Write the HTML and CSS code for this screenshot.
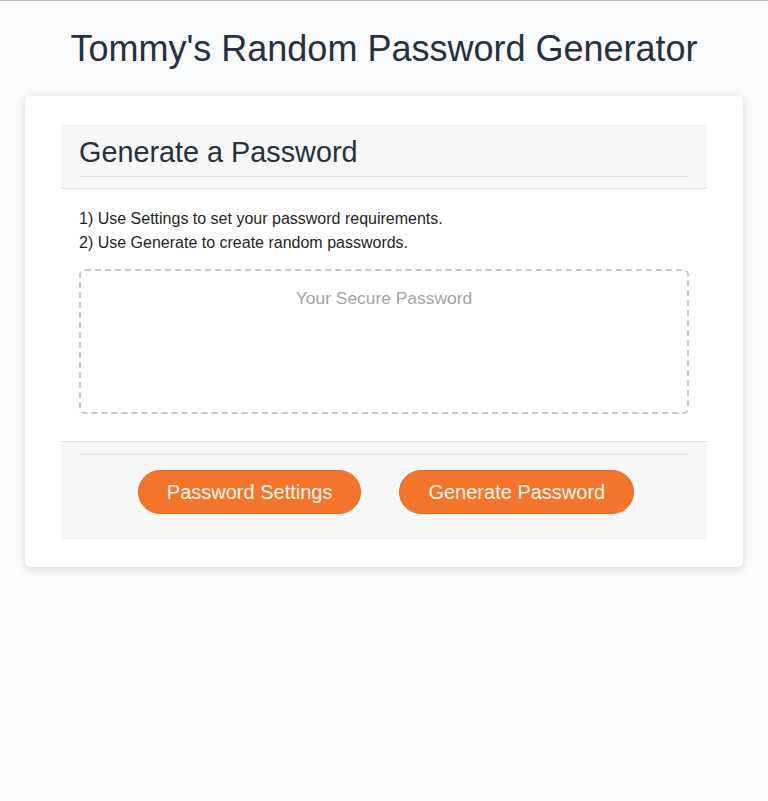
FILE: index.html
```html
<!DOCTYPE html>
<html lang="en">
<head>
<meta charset="UTF-8">
<title>Tommy's Random Password Generator</title>
<link rel="stylesheet" href="styles.css">
</head>
<body>
<div class="wrapper">
  <header class="page-header">
    <h1 class="page-title">Tommy's Random Password Generator</h1>
  </header>
  <main class="outer-card">
    <section class="card">
      <div class="card-header">
        <h2 class="card-title">Generate a Password</h2>
      </div>
      <div class="card-body">
        <p class="step">1) Use Settings to set your password requirements.</p>
        <p class="step">2) Use Generate to create random passwords.</p>
        <textarea class="password-box" readonly placeholder="Your Secure Password"></textarea>
      </div>
      <div class="card-footer">
        <div class="btn-row">
          <button class="btn" type="button">Password Settings</button>
          <button class="btn" type="button">Generate Password</button>
        </div>
      </div>
    </section>
  </main>
</div>
</body>
</html>
```
FILE: styles.css
```css
*, *::before, *::after {
  box-sizing: border-box;
}

html, body {
  margin: 0;
  padding: 0;
  height: 100%;
}

body {
  font-family: "Liberation Sans", Arial, Helvetica, sans-serif;
  background-color: #f9fafc;
  border-top: 1px solid #c2c2c2;
}

.wrapper {
  padding: 26px 25px 0;
}

.page-header {
  text-align: center;
  color: #25313d;
  padding-bottom: 26px;
}

.page-title {
  margin: 0;
  font-size: 36px;
  font-weight: 400;
  line-height: 43px;
}

.outer-card {
  display: block;
  background: #ffffff;
  border-radius: 5px;
  box-shadow: rgba(0, 0, 0, 0.15) 0 2px 8px 0;
  padding: 28px 36px 27px;
}

.card {
  display: flex;
  flex-direction: column;
  border-radius: 4px;
  overflow: hidden;
}

.card-header {
  background: #f7f7f7;
  border-bottom: 1px solid #e0e0e0;
  padding: 11px 18px 11px;
}

.card-title {
  margin: 0;
  font-size: 28.8px;
  font-weight: 400;
  line-height: 34px;
  color: #25313d;
}

.card-header::after {
  content: "";
  display: block;
  height: 1px;
  margin-top: 7px;
  background: #e2e4e6;
}

.card-body {
  padding: 18px 18px 17px;
  background: #ffffff;
}

.step {
  margin: 0;
  font-size: 16px;
  line-height: 24px;
  color: #1f1f1f;
}

.password-box {
  display: block;
  width: 100%;
  height: 145px;
  margin: 14px 0 10px;
  padding: 17px 15px;
  border: 2px dashed #c8c8c8;
  border-radius: 6px;
  font-family: "Liberation Sans", Arial, Helvetica, sans-serif;
  font-size: 17.4px;
  line-height: 20px;
  text-align: center;
  color: #333;
  resize: none;
  overflow: hidden;
  background: #fff;
  outline: none;
}

.password-box::placeholder {
  color: #a3a3a3;
}

.card-footer {
  background: #f7f7f7;
  border-top: 1px solid #e0e0e0;
  padding: 11px 18px 26px;
}

.card-footer::before {
  content: "";
  display: block;
  height: 2px;
  background: #e7e9eb;
}

.btn-row {
  display: flex;
  justify-content: center;
  gap: 38px;
  margin-top: 15px;
  padding-left: 4px;
}

.btn {
  border: 1px solid #e8661f;
  background-color: #f3752c;
  border-radius: 22px;
  color: #fff8f0;
  font-family: "Liberation Sans", Arial, Helvetica, sans-serif;
  font-size: 20px;
  line-height: 22px;
  height: 44px;
  padding: 10px 28px;
  cursor: pointer;
}
```
